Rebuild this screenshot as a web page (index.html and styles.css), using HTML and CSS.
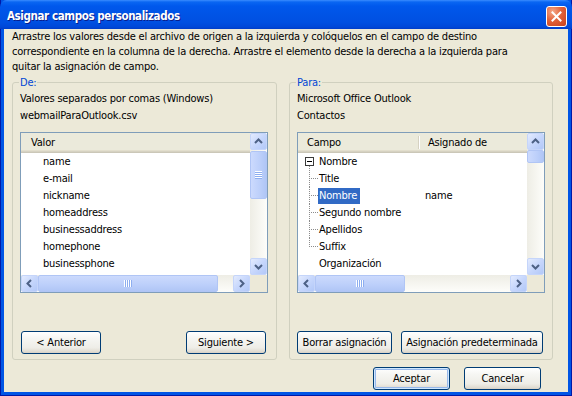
FILE: index.html
```html
<!DOCTYPE html>
<html lang="es">
<head>
    <meta charset="UTF-8">
    <meta name="viewport" content="width=device-width, initial-scale=1.0">
    <title>Asignar campos personalizados</title>
    <link rel="stylesheet" href="styles.css">
</head>
<body>
<div class="window">

    <!-- Title bar -->
    <div class="titlebar">
        <span class="title">Asignar campos personalizados</span>
        <span class="close">
            <svg width="11" height="11" viewBox="0 0 11 11"><path d="M1.5 1.5 L9.5 9.5 M9.5 1.5 L1.5 9.5" stroke="#fff" stroke-width="2" stroke-linecap="square"/></svg>
        </span>
    </div>

    <div class="client">
        <p class="intro">Arrastre los valores desde el archivo de origen a la izquierda y colóquelos en el campo de destino<br>correspondiente en la columna de la derecha. Arrastre el elemento desde la derecha a la izquierda para<br>quitar la asignación de campo.</p>

        <div class="panes">

            <!-- From -->
            <fieldset class="group group-from">
                <legend>De:</legend>
                <div class="static">Valores separados por comas (Windows)</div>
                <div class="static">webmailParaOutlook.csv</div>

                <div class="listview">
                    <div class="lv-main">
                        <div class="lv-header">
                            <div class="col col-valor">Valor</div>
                        </div>
                        <div class="lv-rows">
                            <div class="row item">name</div>
                            <div class="row item">e-mail</div>
                            <div class="row item">nickname</div>
                            <div class="row item">homeaddress</div>
                            <div class="row item">businessaddress</div>
                            <div class="row item">homephone</div>
                            <div class="row item">businessphone</div>
                        </div>
                    </div>
                    <div class="vscroll">
                        <span class="sb-btn"><svg width="15" height="15" viewBox="0 0 15 15"><path d="M4 9 L7.5 5.5 L11 9" fill="none" stroke="#4D6185" stroke-width="2"/></svg></span>
                        <span class="thumb thumb-v thumb-v-long"><i class="grip-v"></i></span>
                        <span class="track"></span>
                        <span class="sb-btn"><svg width="15" height="15" viewBox="0 0 15 15"><path d="M4 6 L7.5 9.5 L11 6" fill="none" stroke="#4D6185" stroke-width="2"/></svg></span>
                    </div>
                    <div class="hscroll">
                        <span class="sb-btn"><svg width="15" height="15" viewBox="0 0 15 15"><path d="M9 4 L5.5 7.5 L9 11" fill="none" stroke="#4D6185" stroke-width="2"/></svg></span>
                        <span class="thumb thumb-h thumb-h-left"><i class="grip-h"></i></span>
                        <span class="track"></span>
                        <span class="sb-btn"><svg width="15" height="15" viewBox="0 0 15 15"><path d="M6 4 L9.5 7.5 L6 11" fill="none" stroke="#4D6185" stroke-width="2"/></svg></span>
                    </div>
                    <div class="corner"></div>
                </div>

                <div class="group-buttons spread">
                    <button class="btn btn-nav">&lt; Anterior</button>
                    <button class="btn btn-nav">Siguiente &gt;</button>
                </div>
            </fieldset>

            <!-- To -->
            <fieldset class="group group-to">
                <legend>Para:</legend>
                <div class="static">Microsoft Office Outlook</div>
                <div class="static">Contactos</div>

                <div class="listview">
                    <div class="lv-main">
                        <div class="lv-header">
                            <div class="col col-campo">Campo</div>
                            <div class="col col-asignado">Asignado de</div>
                        </div>
                        <div class="lv-rows">
                            <div class="row tree-row">
                                <span class="gutter root"><span class="expander"></span></span>
                                <span class="cell-campo">Nombre</span>
                            </div>
                            <div class="row tree-row">
                                <span class="gutter branch"></span>
                                <span class="cell-campo">Title</span>
                            </div>
                            <div class="row tree-row">
                                <span class="gutter branch"></span>
                                <span class="cell-campo"><span class="selected">Nombre</span></span>
                                <span class="cell-asignado">name</span>
                            </div>
                            <div class="row tree-row">
                                <span class="gutter branch"></span>
                                <span class="cell-campo">Segundo nombre</span>
                            </div>
                            <div class="row tree-row">
                                <span class="gutter branch"></span>
                                <span class="cell-campo">Apellidos</span>
                            </div>
                            <div class="row tree-row">
                                <span class="gutter branch last"></span>
                                <span class="cell-campo">Suffix</span>
                            </div>
                            <div class="row tree-row">
                                <span class="gutter"></span>
                                <span class="cell-campo">Organización</span>
                            </div>
                        </div>
                    </div>
                    <div class="vscroll">
                        <span class="sb-btn"><svg width="15" height="15" viewBox="0 0 15 15"><path d="M4 9 L7.5 5.5 L11 9" fill="none" stroke="#4D6185" stroke-width="2"/></svg></span>
                        <span class="thumb thumb-v thumb-v-short"></span>
                        <span class="track"></span>
                        <span class="sb-btn"><svg width="15" height="15" viewBox="0 0 15 15"><path d="M4 6 L7.5 9.5 L11 6" fill="none" stroke="#4D6185" stroke-width="2"/></svg></span>
                    </div>
                    <div class="hscroll">
                        <span class="sb-btn"><svg width="15" height="15" viewBox="0 0 15 15"><path d="M9 4 L5.5 7.5 L9 11" fill="none" stroke="#4D6185" stroke-width="2"/></svg></span>
                        <span class="thumb thumb-h thumb-h-right"><i class="grip-h"></i></span>
                        <span class="track"></span>
                        <span class="sb-btn"><svg width="15" height="15" viewBox="0 0 15 15"><path d="M6 4 L9.5 7.5 L6 11" fill="none" stroke="#4D6185" stroke-width="2"/></svg></span>
                    </div>
                    <div class="corner"></div>
                </div>

                <div class="group-buttons">
                    <button class="btn btn-borrar">Borrar asignación</button>
                    <button class="btn btn-default-map">Asignación predeterminada</button>
                </div>
            </fieldset>
        </div>

        <!-- Dialog buttons -->
        <div class="dialog-buttons">
            <button class="btn btn-dialog is-default">Aceptar</button>
            <button class="btn btn-dialog">Cancelar</button>
        </div>
    </div>
</div>
</body>
</html>
```

FILE: styles.css
```css
* {
    box-sizing: border-box;
}

html, body {
    margin: 0;
    padding: 0;
}

body {
    width: 572px;
    height: 396px;
    overflow: hidden;
    background: #ECE9D8;
    font-family: "DejaVu Sans Condensed", "DejaVu Sans", sans-serif;
    font-size: 11px;
    letter-spacing: -0.2px;
    color: #000;
}

/* window frame */
.window {
    width: 572px;
    height: 396px;
    display: flex;
    flex-direction: column;
    background: #0055E5;
    box-shadow: inset 1px 0 #0019A8, inset -1px 0 #0019A8, inset 0 -1px #0019A8;
}

.titlebar {
    flex: none;
    height: 29px;
    padding: 3px 5px 0 7px;
    display: flex;
    align-items: center;
    justify-content: space-between;
    background: linear-gradient(#3A8CFF 0, #0A66F2 2px, #0058EC 6px, #0054E6 14px, #0050E2 22px, #0048D8 27px, #003DC8 29px);
    border-radius: 7px 7px 0 0;
}

.title {
    color: #fff;
    font-weight: bold;
    font-size: 11.5px;
    letter-spacing: -0.4px;
    text-shadow: 1px 1px #0A1E8C;
}

.close {
    width: 21px;
    height: 21px;
    display: flex;
    align-items: center;
    justify-content: center;
    border: 1px solid #fff;
    border-radius: 3px;
    background: radial-gradient(circle at 30% 25%, #F4A889 0, #E2623A 45%, #C7401C 100%);
}

.client {
    flex: 1;
    margin: 0 4px 4px;
    padding: 0 8px;
    background: #ECE9D8;
    display: flex;
    flex-direction: column;
}

.intro {
    margin: 0;
    line-height: 15px;
    white-space: nowrap;
}

.panes {
    display: flex;
    gap: 12px;
    margin-top: 1px;
}

/* group boxes */
.group {
    margin: 0;
    padding: 0 8px 5px 7px;
    height: 285px;
    min-width: 0;
    border: 1px solid #D0D0BF;
    border-radius: 3px;
}

.group-from {
    width: 265px;
}

.group-to {
    width: 264px;
}

.group legend {
    padding: 0 1px;
    margin-left: -1px;
    line-height: 15px;
    color: #0046D5;
}

.static {
    line-height: 17px;
    white-space: nowrap;
}

/* list views */
.listview {
    width: 248px;
    height: 161px;
    margin-top: 8px;
    border: 1px solid #7F9DB9;
    background: #fff;
    display: grid;
    grid-template-columns: 229px 17px;
    grid-template-rows: 142px 17px;
    overflow: hidden;
}

.lv-main {
    overflow: hidden;
}

.lv-header {
    height: 20px;
    display: flex;
    background: #EBEADB;
    box-shadow: inset 0 -1px #CBC7B8, inset 0 -2px #D6D2C2, inset 0 -3px #E2DECD;
}

.col {
    line-height: 20px;
    padding-left: 9px;
    white-space: nowrap;
}

.col-valor {
    padding-left: 10px;
}

.col-campo {
    width: 121px;
    border-right: 1px solid #D6D2C2;
    box-shadow: 1px 0 #fff;
    margin: 3px 0 4px;
    line-height: 14px;
}

.col-asignado {
    margin: 3px 0 4px;
    line-height: 14px;
}

.row {
    height: 17px;
    line-height: 17px;
    white-space: nowrap;
}

.item {
    padding-left: 22px;
}

/* tree */
.tree-row {
    display: flex;
    align-items: center;
}

.gutter {
    flex: none;
    width: 21px;
    height: 17px;
    display: flex;
    align-items: center;
}

.gutter.root {
    background: repeating-linear-gradient(to bottom, #8C8C8C 0 1px, transparent 1px 2px) 11px 13px / 1px 4px no-repeat;
}

.expander {
    width: 9px;
    height: 9px;
    margin-left: 7px;
    border: 1px solid #3A3A3A;
    background: linear-gradient(#000, #000) center / 5px 1px no-repeat, #fff;
}

.gutter.branch {
    background:
        repeating-linear-gradient(to bottom, #8C8C8C 0 1px, transparent 1px 2px) 11px 0 / 1px 100% no-repeat,
        repeating-linear-gradient(to right, #8C8C8C 0 1px, transparent 1px 2px) 13px 8px / 7px 1px no-repeat;
}

.gutter.branch.last {
    background:
        repeating-linear-gradient(to bottom, #8C8C8C 0 1px, transparent 1px 2px) 11px 0 / 1px 9px no-repeat,
        repeating-linear-gradient(to right, #8C8C8C 0 1px, transparent 1px 2px) 13px 8px / 7px 1px no-repeat;
}

.cell-campo {
    width: 100px;
}

.cell-asignado {
    padding-left: 6px;
}

.selected {
    display: inline-block;
    margin-left: -1px;
    padding: 0 3px 0 1px;
    line-height: 16px;
    background: #316AC5;
    color: #fff;
}

/* scrollbars */
.vscroll,
.hscroll {
    display: flex;
    background: linear-gradient(90deg, #EEEDE5, #FDFDFA);
}

.vscroll {
    flex-direction: column;
}

.hscroll {
    background: linear-gradient(#EEEDE5, #FDFDFA);
}

.track {
    flex: 1;
}

.sb-btn {
    flex: none;
    width: 17px;
    height: 17px;
    display: flex;
    align-items: center;
    justify-content: center;
    border: 1px solid #C5D5FA;
    border-radius: 2px;
    background: linear-gradient(135deg, #E3EBFE 0, #C7D7FC 50%, #B2C8F8 100%);
}

.thumb {
    flex: none;
    display: flex;
    align-items: center;
    justify-content: center;
    border: 1px solid #B0C5F5;
    border-radius: 2px;
    background: linear-gradient(90deg, #CCDAFD, #BCCFFA 60%, #B0C6F6);
}

.thumb-h {
    background: linear-gradient(#CCDAFD, #BCCFFA 60%, #B0C6F6);
}

.thumb-v-long {
    height: 48px;
    margin-top: 1px;
}

.thumb-v-short {
    height: 13px;
}

.thumb-h-left {
    width: 180px;
}

.thumb-h-right {
    width: 90px;
}

.grip-v {
    width: 7px;
    height: 8px;
    background: repeating-linear-gradient(#fff 0 1px, #8DAEF0 1px 2px);
}

.grip-h {
    width: 8px;
    height: 7px;
    background: repeating-linear-gradient(90deg, #fff 0 1px, #8DAEF0 1px 2px);
}

.corner {
    background: #ECE9D8;
}

/* buttons */
.btn {
    height: 23px;
    padding: 0;
    font: inherit;
    letter-spacing: inherit;
    color: #000;
    white-space: nowrap;
    border: 1px solid #003C74;
    border-radius: 3px;
    background: linear-gradient(#FFFFFF 0, #F6F6F3 30%, #EEEDE7 75%, #E1DDD3 92%, #D6D0C5 100%);
}

.group-buttons {
    display: flex;
    gap: 9px;
    margin-top: 38px;
}

.group-buttons.spread {
    justify-content: space-between;
    padding: 0 2px 0 1px;
}

.btn-nav {
    width: 80px;
}

.btn-borrar {
    width: 95px;
}

.btn-default-map {
    width: 142px;
}

.dialog-buttons {
    display: flex;
    justify-content: flex-end;
    gap: 14px;
    margin-top: 7px;
    padding-right: 19px;
}

.btn-dialog {
    width: 77px;
}

.btn-dialog.is-default {
    box-shadow: inset 0 0 0 1px #CEE7FF, inset 0 0 0 2px #98B8EA;
}
```
